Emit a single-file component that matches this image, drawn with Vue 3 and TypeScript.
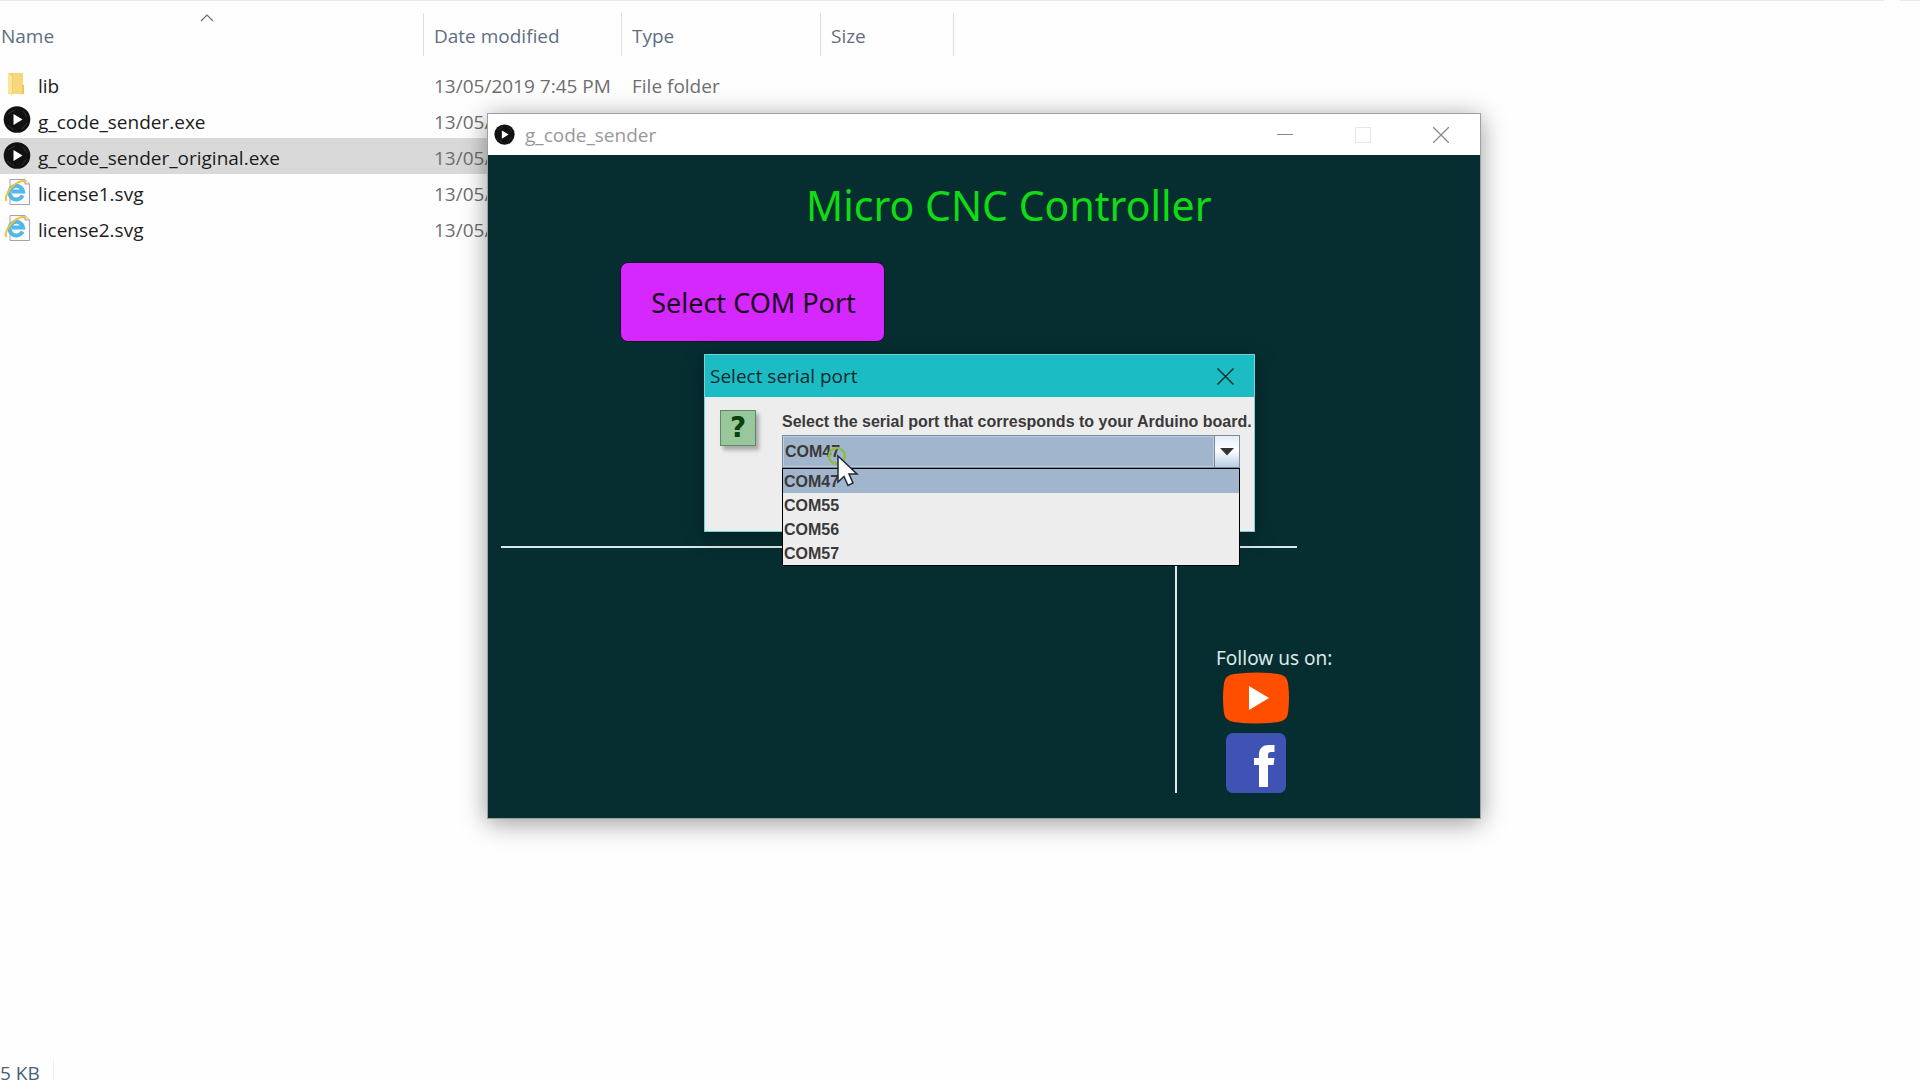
<script setup lang="ts">
import { ref } from 'vue'

interface FileEntry {
  name: string
  icon: 'folder' | 'exe' | 'svg'
  modified: string
  type: string
}

const files: FileEntry[] = [
  { name: 'lib', icon: 'folder', modified: '13/05/2019 7:45 PM', type: 'File folder' },
  { name: 'g_code_sender.exe', icon: 'exe', modified: '13/05/2019', type: '' },
  { name: 'g_code_sender_original.exe', icon: 'exe', modified: '13/05/2019', type: '' },
  { name: 'license1.svg', icon: 'svg', modified: '13/05/2019', type: '' },
  { name: 'license2.svg', icon: 'svg', modified: '13/05/2019', type: '' },
]
const selectedFile = ref('g_code_sender_original.exe')

const ports: string[] = ['COM47', 'COM55', 'COM56', 'COM57']
const port = ref('COM47')
</script>

<template>
  <div class="desktop">
    <div class="topline"><span class="topline-main"></span><span class="topline-end"></span></div>

    <main class="explorer">
      <table class="files">
        <colgroup>
          <col class="col-name" />
          <col class="col-date" />
          <col class="col-type" />
          <col class="col-size" />
        </colgroup>
        <thead>
          <tr>
            <th scope="col" class="first">
              <span class="head">Name</span>
              <svg class="sort" width="14" height="8" viewBox="0 0 14 8" aria-hidden="true">
                <path d="M1 7L7 1L13 7" fill="none" stroke="#6d6d6d" stroke-width="1.2" />
              </svg>
            </th>
            <th scope="col"><span class="head">Date modified</span></th>
            <th scope="col"><span class="head">Type</span></th>
            <th scope="col"><span class="head">Size</span></th>
          </tr>
        </thead>
        <tbody>
          <tr
            v-for="file in files"
            :key="file.name"
            :class="{ selected: file.name === selectedFile }"
            @click="selectedFile = file.name"
          >
            <td class="first">
              <span class="file">
                <svg v-if="file.icon === 'folder'" class="icon" viewBox="0 0 28 28" aria-hidden="true">
                  <path d="M5 3H20V24H5Z" fill="#f3cd6d" />
                  <path d="M10 3H20V24H10Z" fill="#f7d67c" />
                  <path d="M19 15H21V24H19Z" fill="#efc254" />
                  <path d="M5 3L9 6V26L5 23Z" fill="#fde49c" />
                </svg>
                <svg v-else-if="file.icon === 'exe'" class="icon" viewBox="0 0 28 28" aria-hidden="true">
                  <circle cx="14" cy="13.500" r="13.3" fill="#111" />
                  <path d="M5 8L12 4M20 5L24 11M4 19L11 24M19 23L24 17" stroke="#333" fill="none" />
                  <path d="M10.500 8L19.500 13.500L10.500 19Z" fill="#fff" />
                </svg>
                <svg v-else class="icon" viewBox="0 0 28 28" aria-hidden="true">
                  <path d="M7 1.500H22L26.500 6V26.500H7Z" fill="#fbfbfb" stroke="#a5a5a5" />
                  <path d="M22 1.500V6H26.500" fill="#e4e4e4" stroke="#a5a5a5" />
                  <path
                    d="M19.500 17.500A6.800 6.800 0 1 1 20 13.500H9"
                    fill="none"
                    stroke="#53b7e8"
                    stroke-width="4"
                  />
                  <path
                    d="M3.500 23C1 20 6 10 13 5.500C18 2.500 22 2 22 5"
                    fill="none"
                    stroke="#efc23a"
                    stroke-width="2"
                  />
                </svg>
                <span class="file-name">{{ file.name }}</span>
              </span>
            </td>
            <td>{{ file.modified }}</td>
            <td>{{ file.type }}</td>
            <td></td>
          </tr>
        </tbody>
      </table>
    </main>

    <footer class="status"><span>5 KB</span></footer>

    <section class="window" aria-label="g_code_sender">
      <header class="titlebar">
        <svg class="app-icon" viewBox="0 0 28 28" aria-hidden="true">
          <circle cx="14" cy="14" r="13.5" fill="#111" />
          <path d="M5 8L12 4M20 5L24 11M4 19L11 24M19 23L24 17" stroke="#333" fill="none" />
          <path d="M10.500 8.500L19.500 14L10.500 19.500Z" fill="#fff" />
        </svg>
        <span class="title">g_code_sender</span>
        <button class="caption" type="button" aria-label="Minimize">
          <svg width="16" height="16" viewBox="0 0 16 16"><path d="M0 7.500H16" stroke="#8a8a8a" /></svg>
        </button>
        <button class="caption" type="button" aria-label="Maximize" disabled>
          <svg width="16" height="16" viewBox="0 0 16 16">
            <rect x="0.500" y="0.500" width="15" height="15" fill="none" stroke="#e6e6e6" />
          </svg>
        </button>
        <button class="caption" type="button" aria-label="Close">
          <svg width="16" height="16" viewBox="0 0 16 16">
            <path d="M0 0L16 16M16 0L0 16" stroke="#8a8a8a" stroke-width="1.300" />
          </svg>
        </button>
      </header>

      <div class="sketch">
        <h1>Micro CNC Controller</h1>
        <button class="com-button" type="button">Select COM Port</button>
        <hr />
        <div class="lower">
          <aside class="follow">
            <p>Follow us on:</p>
            <a href="#youtube" aria-label="YouTube">
              <svg width="68" height="52" viewBox="0 0 68 52">
                <path
                  d="M12 2Q34 -1 56 2Q65 3 66 11Q68 26 66 41Q65 49 56 50Q34 53 12 50Q3 49 2 41Q0 26 2 11Q3 3 12 2Z"
                  fill="#ff4e00"
                />
                <path d="M27 14L47 26L27 38Z" fill="#fff" />
              </svg>
            </a>
            <a href="#facebook" aria-label="Facebook">
              <svg width="60" height="60" viewBox="0 0 60 60">
                <rect width="60" height="60" rx="7" fill="#3f53b5" />
                <path
                  d="M33 54V32H28V25H33V22C33 15 37 12 43 12H48.500V19H45C43 19 42 20 42 22V25H48.500L47.500 32H42V54Z"
                  fill="#fff"
                />
              </svg>
            </a>
          </aside>
        </div>
      </div>

      <div class="dialog" role="dialog" aria-labelledby="dialog-title">
        <header class="dialog-bar">
          <span id="dialog-title">Select serial port</span>
          <button class="dialog-close" type="button" aria-label="Close dialog">
            <svg width="17" height="17" viewBox="0 0 17 17">
              <path d="M0.500 0.500L16.500 16.500M16.500 0.500L0.500 16.500" stroke="#12282a" stroke-width="1.400" />
            </svg>
          </button>
        </header>
        <div class="dialog-body">
          <span class="question" aria-hidden="true">?</span>
          <div class="field">
            <label for="port">Select the serial port that corresponds to your Arduino board.</label>
            <div class="combo">
              <select id="port" v-model="port">
                <option v-for="p in ports" :key="p">{{ p }}</option>
              </select>
              <span class="arrow" aria-hidden="true">
                <svg width="14" height="8" viewBox="0 0 14 8"><path d="M0 0H14L7 7.500Z" fill="#333" /></svg>
              </span>
              <ul class="popup" role="listbox" aria-label="Serial ports">
                <li
                  v-for="p in ports"
                  :key="p"
                  role="option"
                  :aria-selected="p === port"
                  :class="{ active: p === port }"
                  @click="port = p"
                >
                  {{ p }}
                </li>
              </ul>
              <svg class="cursor" width="32" height="44" viewBox="0 0 32 44" aria-hidden="true">
                <circle cx="10" cy="10" r="8" fill="none" stroke="#94b84a" stroke-width="2.500" />
                <path
                  d="M11 10L30 28H22L26 37L21 39.500L17 30.500L11 36Z"
                  fill="#fff"
                  stroke="#1c2b3a"
                  stroke-width="1.500"
                />
              </svg>
            </div>
          </div>
        </div>
      </div>
    </section>
  </div>
</template>

<style>
body {
  margin: 0;
  background: #fefefe;
}
</style>

<style scoped>
* {
  box-sizing: border-box;
}

.desktop {
  position: relative;
  display: flex;
  flex-direction: column;
  height: 100vh;
  overflow: hidden;
  background: #fefefe;
  font: 19px/28px 'Open Sans', 'Noto Sans', sans-serif;
  color: #1c1c1c;
}

.topline {
  display: flex;
  gap: 16px;
  height: 1px;
}

.topline-main {
  flex: 1;
  background: #e9e9e9;
}

.topline-end {
  width: 20px;
  background: #e9e9e9;
}

.explorer {
  flex: 1;
}

.files {
  width: 954px;
  table-layout: fixed;
  border-collapse: collapse;
}

.col-name {
  width: 424px;
}

.col-date {
  width: 198px;
}

.col-type {
  width: 199px;
}

.files th {
  position: relative;
  padding: 12px 0 10px;
  font-weight: 400;
  text-align: left;
  color: #5f6e85;
}

.head {
  display: flex;
  align-items: center;
  height: 43px;
  padding: 3px 0 0 10px;
  border-right: 1px solid #dedede;
}

.first .head {
  padding-left: 1px;
}

.sort {
  position: absolute;
  top: 13px;
  left: 200px;
}

.files td {
  height: 36px;
  padding: 3px 0 0 10px;
  white-space: nowrap;
  color: #6e6e6e;
}

.files td.first {
  padding: 0 0 0 3px;
  color: #1c1c1c;
}

.selected td {
  background: #d9d9d9;
}

.file {
  display: flex;
  align-items: center;
  gap: 7px;
  height: 36px;
}

.file-name {
  padding-top: 3px;
}

.icon {
  width: 28px;
  height: 28px;
}

.status {
  height: 22px;
  line-height: 30px;
  color: #4a5f7a;
}

.status span {
  display: inline-block;
  width: 54px;
  border-right: 1px solid #f2f2f2;
}

.window {
  position: absolute;
  top: 113px;
  left: 487px;
  width: 994px;
  border: 1px solid #9aa3a3;
  background: #fff;
  box-shadow: 0 4px 24px rgba(0, 0, 0, 0.4);
}

.titlebar {
  display: flex;
  align-items: center;
  height: 41px;
  padding-left: 6px;
}

.app-icon {
  width: 21px;
  height: 21px;
}

.title {
  flex: 1;
  padding-left: 10px;
  color: #999;
}

.caption {
  display: grid;
  place-items: center;
  width: 78px;
  height: 40px;
  padding: 0;
  border: 0;
  background: none;
}

.sketch {
  height: 663px;
  padding-top: 20px;
  background: #062e31;
}

h1 {
  margin: 0;
  padding-left: 318px;
  font: 400 41px/60px 'Noto Sans', sans-serif;
  color: #0fdc14;
}

.com-button {
  display: block;
  width: 265px;
  height: 80px;
  margin: 27px 0 0 132px;
  padding: 2px 0 0 2px;
  border: 1px solid #23082c;
  border-radius: 8px;
  background: #d528ff;
  font: 27px/36px 'Noto Sans', sans-serif;
  color: #1a0420;
}

hr {
  height: 2px;
  margin: 204px 183px 0 13px;
  border: 0;
  background: #dbe8e8;
}

.lower {
  display: flex;
  justify-content: flex-end;
}

.follow {
  display: flex;
  flex-direction: column;
  width: 305px;
  height: 245px;
  padding: 100px 0 0 39px;
  border-left: 2px solid #dbe8e8;
}

.follow p {
  margin: 0;
  font: 19px/20px 'Noto Sans', sans-serif;
  color: #dbe8e8;
}

.follow a {
  display: grid;
  place-items: center;
  width: 80px;
  height: 60px;
}

.follow a + a {
  margin-top: 6px;
}

.dialog {
  position: absolute;
  top: 240px;
  left: 216px;
  width: 551px;
  border: 1px solid #74d3d8;
  background: #ededed;
  box-shadow: 0 4px 20px rgba(0, 0, 0, 0.35);
}

.dialog-bar {
  display: flex;
  align-items: center;
  justify-content: space-between;
  height: 42px;
  padding-left: 5px;
  background: #1cbcc5;
  color: #12282a;
}

.dialog-close {
  display: grid;
  place-items: center;
  width: 58px;
  height: 40px;
  padding: 0;
  border: 0;
  background: none;
}

.dialog-body {
  display: flex;
  gap: 26px;
  height: 134px;
  padding: 13px 14px 0 15px;
  font: 700 16px/24px 'Liberation Sans', Arial, sans-serif;
  color: #3a3a3a;
}

.question {
  flex: none;
  width: 36px;
  height: 36px;
  border: 1px solid #5e8a63;
  background: #99c79b;
  box-shadow: 3px 4px 4px rgba(0, 0, 0, 0.3);
  font: 700 28px/34px 'DejaVu Sans', sans-serif;
  text-align: center;
  color: #0b430f;
}

.field {
  flex: 1;
  min-width: 0;
}

.field label {
  display: block;
  white-space: nowrap;
}

.combo {
  position: relative;
  display: flex;
  height: 33px;
  margin-top: 1px;
  border: 1px solid #7a8a99;
}

.combo select {
  flex: 1;
  appearance: none;
  padding: 0 1px;
  border: 1px solid #b8cfe5;
  border-radius: 0;
  background: #a1b6cc;
  font: inherit;
  color: #3a3a3a;
}

.arrow {
  display: grid;
  place-items: center;
  width: 25px;
  border-left: 1px solid #7a8a99;
  background: linear-gradient(#e4edf6, #fff 45%, #b9cfe6);
}

.popup {
  position: absolute;
  top: 32px;
  right: -1px;
  left: -1px;
  margin: 0;
  padding: 0;
  border: 1px solid #000;
  background: #ededed;
  line-height: 22px;
  list-style: none;
}

.popup li {
  padding: 2px 0 0 1px;
}

.popup .active {
  background: #a1b6cc;
}

.cursor {
  position: absolute;
  top: 10px;
  left: 44px;
}
</style>
